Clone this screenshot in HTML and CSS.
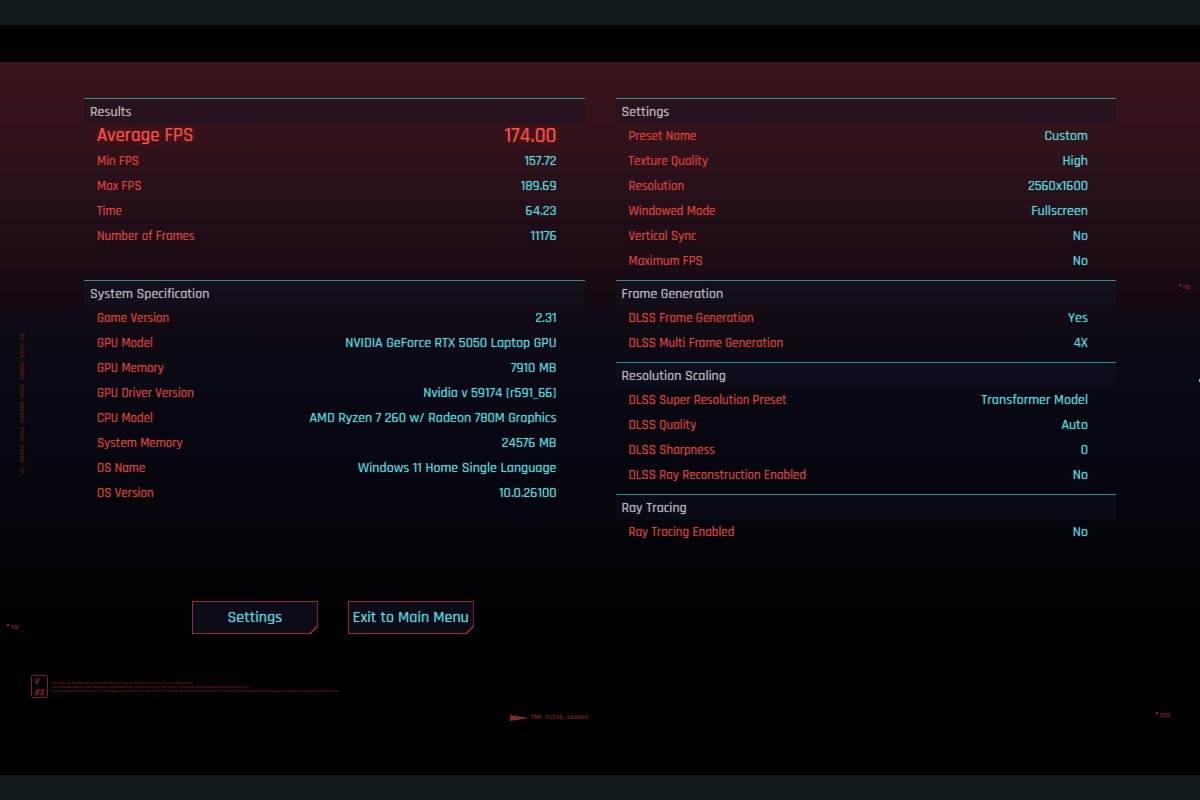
FILE: index.html
```html
<!DOCTYPE html>
<html lang="en">
<head>
  <meta charset="UTF-8" />
  <meta name="viewport" content="width=device-width, initial-scale=1.0"/>
  <title>Benchmark Results</title>
  <link rel="stylesheet" href="styles.css">
</head>
<body>
  <main class="screen">
    <div class="columns">
      <!-- LEFT COLUMN -->
      <div class="column">
        <section class="panel panel-results">
          <h2>Results</h2>
          <table>
            <tr class="highlight"><th scope="row">Average FPS</th><td>174.00</td></tr>
            <tr><th scope="row">Min FPS</th><td>157.72</td></tr>
            <tr><th scope="row">Max FPS</th><td>189.69</td></tr>
            <tr><th scope="row">Time</th><td>64.23</td></tr>
            <tr><th scope="row">Number of Frames</th><td>11176</td></tr>
          </table>
        </section>

        <section class="panel">
          <h2>System Specification</h2>
          <table>
            <tr><th scope="row">Game Version</th><td>2.31</td></tr>
            <tr><th scope="row">GPU Model</th><td>NVIDIA GeForce RTX 5050 Laptop GPU</td></tr>
            <tr><th scope="row">GPU Memory</th><td>7910 MB</td></tr>
            <tr><th scope="row">GPU Driver Version</th><td>Nvidia v 59174 [r591_66]</td></tr>
            <tr><th scope="row">CPU Model</th><td>AMD Ryzen 7 260 w/ Radeon 780M Graphics</td></tr>
            <tr><th scope="row">System Memory</th><td>24576 MB</td></tr>
            <tr><th scope="row">OS Name</th><td>Windows 11 Home Single Language</td></tr>
            <tr><th scope="row">OS Version</th><td>10.0.26100</td></tr>
          </table>
        </section>

        <div class="actions">
          <button type="button">Settings</button>
          <button type="button">Exit to Main Menu</button>
        </div>
      </div>

      <!-- RIGHT COLUMN -->
      <div class="column">
        <section class="panel">
          <h2>Settings</h2>
          <table>
            <tr><th scope="row">Preset Name</th><td>Custom</td></tr>
            <tr><th scope="row">Texture Quality</th><td>High</td></tr>
            <tr><th scope="row">Resolution</th><td>2560x1600</td></tr>
            <tr><th scope="row">Windowed Mode</th><td>Fullscreen</td></tr>
            <tr><th scope="row">Vertical Sync</th><td>No</td></tr>
            <tr><th scope="row">Maximum FPS</th><td>No</td></tr>
          </table>
        </section>

        <section class="panel">
          <h2>Frame Generation</h2>
          <table>
            <tr><th scope="row">DLSS Frame Generation</th><td>Yes</td></tr>
            <tr><th scope="row">DLSS Multi Frame Generation</th><td>4X</td></tr>
          </table>
        </section>

        <section class="panel">
          <h2>Resolution Scaling</h2>
          <table>
            <tr><th scope="row">DLSS Super Resolution Preset</th><td>Transformer Model</td></tr>
            <tr><th scope="row">DLSS Quality</th><td>Auto</td></tr>
            <tr><th scope="row">DLSS Sharpness</th><td>0</td></tr>
            <tr><th scope="row">DLSS Ray Reconstruction Enabled</th><td>No</td></tr>
          </table>
        </section>

        <section class="panel">
          <h2>Ray Tracing</h2>
          <table>
            <tr><th scope="row">Ray Tracing Enabled</th><td>No</td></tr>
          </table>
        </section>
      </div>
    </div>

    <footer class="footer">
      <div class="legal">
        <div class="badge"><span>V</span><span>85</span></div>
        <p>
          The data you entered as an input terminal will only be used for the purpose you entered them.<br>
          Your personal data will be protected in accordance with the 2021 Privacy Act, 2020 E Directives and the latest Network Security Act.<br>
          In accordance with order Venus IV 2022 and its by-Section for use of non-Contented Service and Reconstruction Products, Robust systems and processes to ensure privacy and all access rules.
        </p>
      </div>
      <div class="track">
        <svg width="19" height="6" viewBox="0 0 19 6"><path d="M0 0 L19 3 L0 6 Z" fill="#8a2725"/></svg>
        <span>TRK_TLCAS_000095</span>
      </div>
    </footer>

    <!-- HUD markers over the background -->
    <span class="serial">00 2560.00000 2560.000000 2560.00000 CP</span>
    <span class="marker marker-left">758</span>
    <span class="marker marker-right">768</span>
    <span class="marker marker-corner">2560</span>
    <span class="edge-tick"></span>
  </main>
</body>
</html>
```
FILE: styles.css
```css
* {
  margin: 0;
  padding: 0;
  box-sizing: border-box;
}

body {
  display: flex;
  min-height: 100vh;
  padding: 25px 0;
  background-color: #12191c;
  font-family: Rajdhani, Roboto, sans-serif;
  font-size: 14px;
}

.screen {
  position: relative;
  flex: 1;
  display: flex;
  flex-direction: column;
  border-top: 37px solid #000;
  padding-top: 36px;
  background: #000 linear-gradient(#3a141a 0, #32131a 80px, #220f18 150px, #180a14 215px, #0c0a14 290px, #070812 350px, #04050c 450px, #010103 560px, #000 640px);
}

.columns {
  display: grid;
  grid-template-columns: 1fr 1fr;
  gap: 31px;
  padding: 0 84px;
}

/* Panels */
.panel {
  margin-bottom: 7px;
}

.panel-results {
  margin-bottom: 32px;
}

.panel h2 {
  height: 26px;
  margin-bottom: -1px;
  padding-left: 6px;
  border-top: 1px solid #2f8a8d;
  background-color: rgba(20, 20, 40, 0.4);
  color: #bcbabc;
  font-size: 14px;
  font-weight: 500;
  line-height: 26px;
  text-shadow: 0 0 1px rgba(188, 186, 188, 0.6);
}

.panel table {
  width: 100%;
  border-collapse: collapse;
}

.panel tr {
  height: 25px;
}

.panel th {
  padding-left: 13px;
  color: #dc443d;
  font-size: 13px;
  font-weight: 500;
  text-align: left;
  text-shadow: 0 0 1px rgba(220, 68, 61, 0.6);
}

.panel td {
  padding-right: 28px;
  color: #55d9df;
  font-weight: 500;
  text-align: right;
  text-shadow: 0 0 1px rgba(85, 217, 223, 0.7);
}

.panel .highlight th,
.panel .highlight td {
  color: #fa5148;
  font-size: 19px;
  line-height: 25px;
  text-shadow: 0 0 1px rgba(250, 81, 72, 0.6), 0 0 9px rgba(250, 60, 50, 0.4);
}

.panel .highlight td {
  font-size: 21px;
}

/* Buttons */
.actions {
  display: flex;
  justify-content: center;
  gap: 30px;
  margin-top: 96px;
  padding-right: 3px;
}

.actions button {
  width: 126px;
  height: 33px;
  border: 1px solid #9a2c2e;
  background: #0b0c17 linear-gradient(135deg, transparent 43%, #9a2c2e 43%) right bottom / 8px 8px no-repeat border-box;
  clip-path: polygon(0 0, 100% 0, 100% calc(100% - 7px), calc(100% - 7px) 100%, 0 100%);
  color: #55d9df;
  font-family: inherit;
  font-size: 16px;
  font-weight: 500;
  white-space: nowrap;
  text-shadow: 0 0 1px rgba(85, 217, 223, 0.7);
  cursor: pointer;
}

/* Footer */
.footer {
  padding: 41px 31px 0;
  color: #7a201e;
}

.legal {
  display: flex;
  align-items: center;
  gap: 3px;
}

.legal p {
  color: #9a2826;
  font-family: "DejaVu Sans", sans-serif;
  font-size: 3px;
  line-height: 4px;
  white-space: nowrap;
}

.badge {
  display: flex;
  flex-direction: column;
  width: 17px;
  height: 23px;
  padding: 0 2px;
  border: 1px solid #7a2221;
  border-radius: 2px;
  color: #8a2725;
  font-size: 9px;
  font-style: italic;
  font-weight: 700;
  line-height: 11px;
}

.track {
  display: flex;
  align-items: center;
  justify-content: center;
  gap: 2px;
  margin-top: 16px;
  padding-right: 102px;
  font-family: "Liberation Mono", monospace;
  font-size: 6px;
  font-weight: 700;
  line-height: 8px;
}

/* HUD markers */
.serial {
  position: absolute;
  top: 271px;
  left: 17px;
  color: #5c171b;
  font-family: "Liberation Mono", monospace;
  font-size: 6px;
  font-weight: 700;
  line-height: 8px;
  white-space: nowrap;
  writing-mode: vertical-rl;
}

.marker {
  position: absolute;
  padding: 1px 0 0 4px;
  color: #7d2023;
  font-size: 5px;
  font-weight: 700;
  line-height: 6px;
}

.marker::before {
  content: "";
  position: absolute;
  top: 0;
  left: 0;
  width: 2px;
  height: 2px;
  background-color: #8c2a2c;
}

.marker-left {
  top: 562px;
  left: 7px;
}

.marker-right {
  top: 222px;
  right: 10px;
}

.marker-corner {
  right: 30px;
  bottom: 56px;
}

.edge-tick {
  position: absolute;
  top: 317px;
  right: 0;
  width: 1px;
  height: 3px;
  background-color: #55d9df;
}
```
